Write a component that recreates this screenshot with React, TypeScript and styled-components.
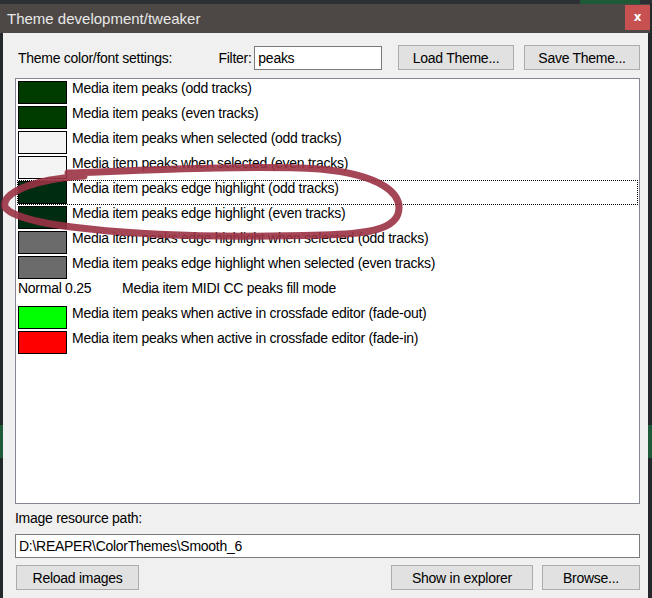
import { createGlobalStyle } from "styled-components";
import styled from "styled-components";

const GlobalStyle = createGlobalStyle`
  html, body {
    margin: 0;
    padding: 0;
    background: #2a2d30;
  }
  * {
    box-sizing: border-box;
  }
`;

const Desktop = styled.div`
  position: relative;
  width: 652px;
  height: 598px;
  overflow: hidden;
  display: flex;
  flex-direction: column;
  background:
    linear-gradient(to bottom, transparent 425px, #1f5a3a 425px, #1f5a3a 458px, transparent 458px),
    #25282b;
  font-family: "Liberation Sans", Arial, sans-serif;
  font-size: 14px;
  color: #000;
`;

const TopStrip = styled.div`
  height: 4px;
  flex: none;
  background: linear-gradient(to right, #2c3034 0, #2c3034 580px, #1d5a35 580px, #1d5a35 640px, #2c3034 640px);
`;

const Window = styled.div`
  flex: 1;
  display: flex;
  flex-direction: column;
  margin-right: 2px;
  min-height: 0;
`;

const TitleBar = styled.div`
  height: 29px;
  flex: none;
  display: flex;
  align-items: center;
  justify-content: space-between;
  background: #4d4845;
  padding-left: 7px;
`;

const Title = styled.span`
  font-family: "Liberation Sans", Arial, sans-serif;
  font-size: 15px;
  color: #e8e8e8;
  letter-spacing: 0;
`;

const CloseButton = styled.div`
  width: 25px;
  height: 25px;
  align-self: flex-start;
  margin-top: 1px;
  background: #c75050;
  color: #fff;
  display: flex;
  align-items: center;
  justify-content: center;
  font-family: "DejaVu Sans", sans-serif;
  font-weight: bold;
  font-size: 12px;
  line-height: 1;
  padding-bottom: 2px;
`;

const Body = styled.div`
  flex: 1;
  min-height: 0;
  margin-left: 3px;
  margin-right: 2px;
  background: #f0f0f0;
  padding: 12px 8px 8px 12px;
  display: flex;
  flex-direction: column;
  letter-spacing: -0.27px;
`;

const ControlRow = styled.div`
  height: 25px;
  flex: none;
  display: flex;
  align-items: center;
`;

const Label = styled.span<{ $width?: number }>`
  display: inline-block;
  white-space: nowrap;
  ${(p) => (p.$width ? `width: ${p.$width}px;` : "")}
`;

const TextField = styled.div<{ $width?: number }>`
  height: 24px;
  ${(p) => (p.$width ? `width: ${p.$width}px;` : "flex: 1;")}
  background: #fff;
  border: 1px solid #7a7a7a;
  display: flex;
  align-items: center;
  padding-left: 3px;
  white-space: nowrap;
`;

const Button = styled.div<{ $width: number }>`
  width: ${(p) => p.$width}px;
  height: 25px;
  flex: none;
  background: #e1e1e1;
  border: 1px solid #adadad;
  display: flex;
  align-items: center;
  justify-content: center;
  white-space: nowrap;
`;

const List = styled.div`
  flex: 1;
  min-height: 0;
  margin-top: 8px;
  background: #fff;
  border: 1px solid #828790;
  padding: 1px 1px;
  display: flex;
  flex-direction: column;
`;

const Row = styled.div<{ $focused?: boolean }>`
  height: 25px;
  flex: none;
  display: flex;
  align-items: flex-start;
  border: 1px dotted ${(p) => (p.$focused ? "#000" : "transparent")};
  white-space: nowrap;
`;

const Swatch = styled.div<{ $color: string }>`
  width: 49px;
  height: 23px;
  flex: none;
  background: ${(p) => p.$color};
  border: 1px solid #000;
`;

const RowText = styled.span`
  margin-left: 5px;
  line-height: 15px;
`;

const ValueText = styled.span`
  width: 99px;
  line-height: 15px;
  flex: none;
`;

const PathLabel = styled.div`
  margin-top: 7px;
  height: 15px;
  line-height: 15px;
`;

const PathRow = styled.div`
  margin-top: 8px;
  height: 23px;
  display: flex;
`;

const BottomRow = styled.div`
  margin-top: 8px;
  display: flex;
  align-items: center;
  padding-left: 1px;
  gap: 9px;
`;

const Spacer = styled.div`
  flex: 1;
`;

const Annotation = styled.svg`
  position: absolute;
  left: 0;
  top: 0;
  width: 652px;
  height: 598px;
  pointer-events: none;
`;

type Item =
  | { kind: "color"; color: string; label: string }
  | { kind: "value"; value: string; label: string };

const items: Item[] = [
  { kind: "color", color: "#003c00", label: "Media item peaks (odd tracks)" },
  { kind: "color", color: "#003c00", label: "Media item peaks (even tracks)" },
  { kind: "color", color: "#f4f4f4", label: "Media item peaks when selected (odd tracks)" },
  { kind: "color", color: "#f4f4f4", label: "Media item peaks when selected (even tracks)" },
  { kind: "color", color: "#002c12", label: "Media item peaks edge highlight (odd tracks)" },
  { kind: "color", color: "#002c12", label: "Media item peaks edge highlight (even tracks)" },
  { kind: "color", color: "#6b6b6b", label: "Media item peaks edge highlight when selected (odd tracks)" },
  { kind: "color", color: "#6b6b6b", label: "Media item peaks edge highlight when selected (even tracks)" },
  { kind: "value", value: "Normal 0.25", label: "Media item MIDI CC peaks fill mode" },
  { kind: "color", color: "#00ff00", label: "Media item peaks when active in crossfade editor (fade-out)" },
  { kind: "color", color: "#ff0000", label: "Media item peaks when active in crossfade editor (fade-in)" },
];

export default function App() {
  return (
    <>
      <GlobalStyle />
      <Desktop>
        <TopStrip />
        <Window>
          <TitleBar>
            <Title>Theme development/tweaker</Title>
            <CloseButton>x</CloseButton>
          </TitleBar>
          <Body>
            <ControlRow>
              <Label $width={204} style={{ paddingLeft: 3 }}>
                Theme color/font settings:
              </Label>
              <Label $width={36}>Filter:</Label>
              <TextField $width={128}>peaks</TextField>
              <Button $width={116} style={{ marginLeft: 16 }}>
                Load Theme...
              </Button>
              <Button $width={116} style={{ marginLeft: 10 }}>
                Save Theme...
              </Button>
            </ControlRow>
            <List>
              {items.map((item, i) => (
                <Row key={i} $focused={i === 4}>
                  {item.kind === "color" ? (
                    <>
                      <Swatch $color={item.color} />
                      <RowText>{item.label}</RowText>
                    </>
                  ) : (
                    <>
                      <ValueText>{item.value}</ValueText>
                      <RowText>{item.label}</RowText>
                    </>
                  )}
                </Row>
              ))}
            </List>
            <PathLabel>Image resource path:</PathLabel>
            <PathRow>
              <TextField>D:\REAPER\ColorThemes\Smooth_6</TextField>
            </PathRow>
            <BottomRow>
              <Button $width={123}>Reload images</Button>
              <Spacer />
              <Button $width={142}>Show in explorer</Button>
              <Button $width={98}>Browse...</Button>
            </BottomRow>
          </Body>
        </Window>
        <Annotation viewBox="0 0 652 598">
          <path
            d="M 68 173 C 150 170 250 165 320 169 C 382 175 404 194 398 214 C 392 231 362 234 322 235 C 250 237 160 237 90 229 C 50 225 12 218 5 207 C 2 196 20 186 50 180 C 62 178 72 177 84 176"
            fill="none"
            stroke="#9b3245"
            strokeOpacity={0.9}
            strokeWidth={7}
            strokeLinecap="round"
            strokeLinejoin="round"
          />
        </Annotation>
      </Desktop>
    </>
  );
}
